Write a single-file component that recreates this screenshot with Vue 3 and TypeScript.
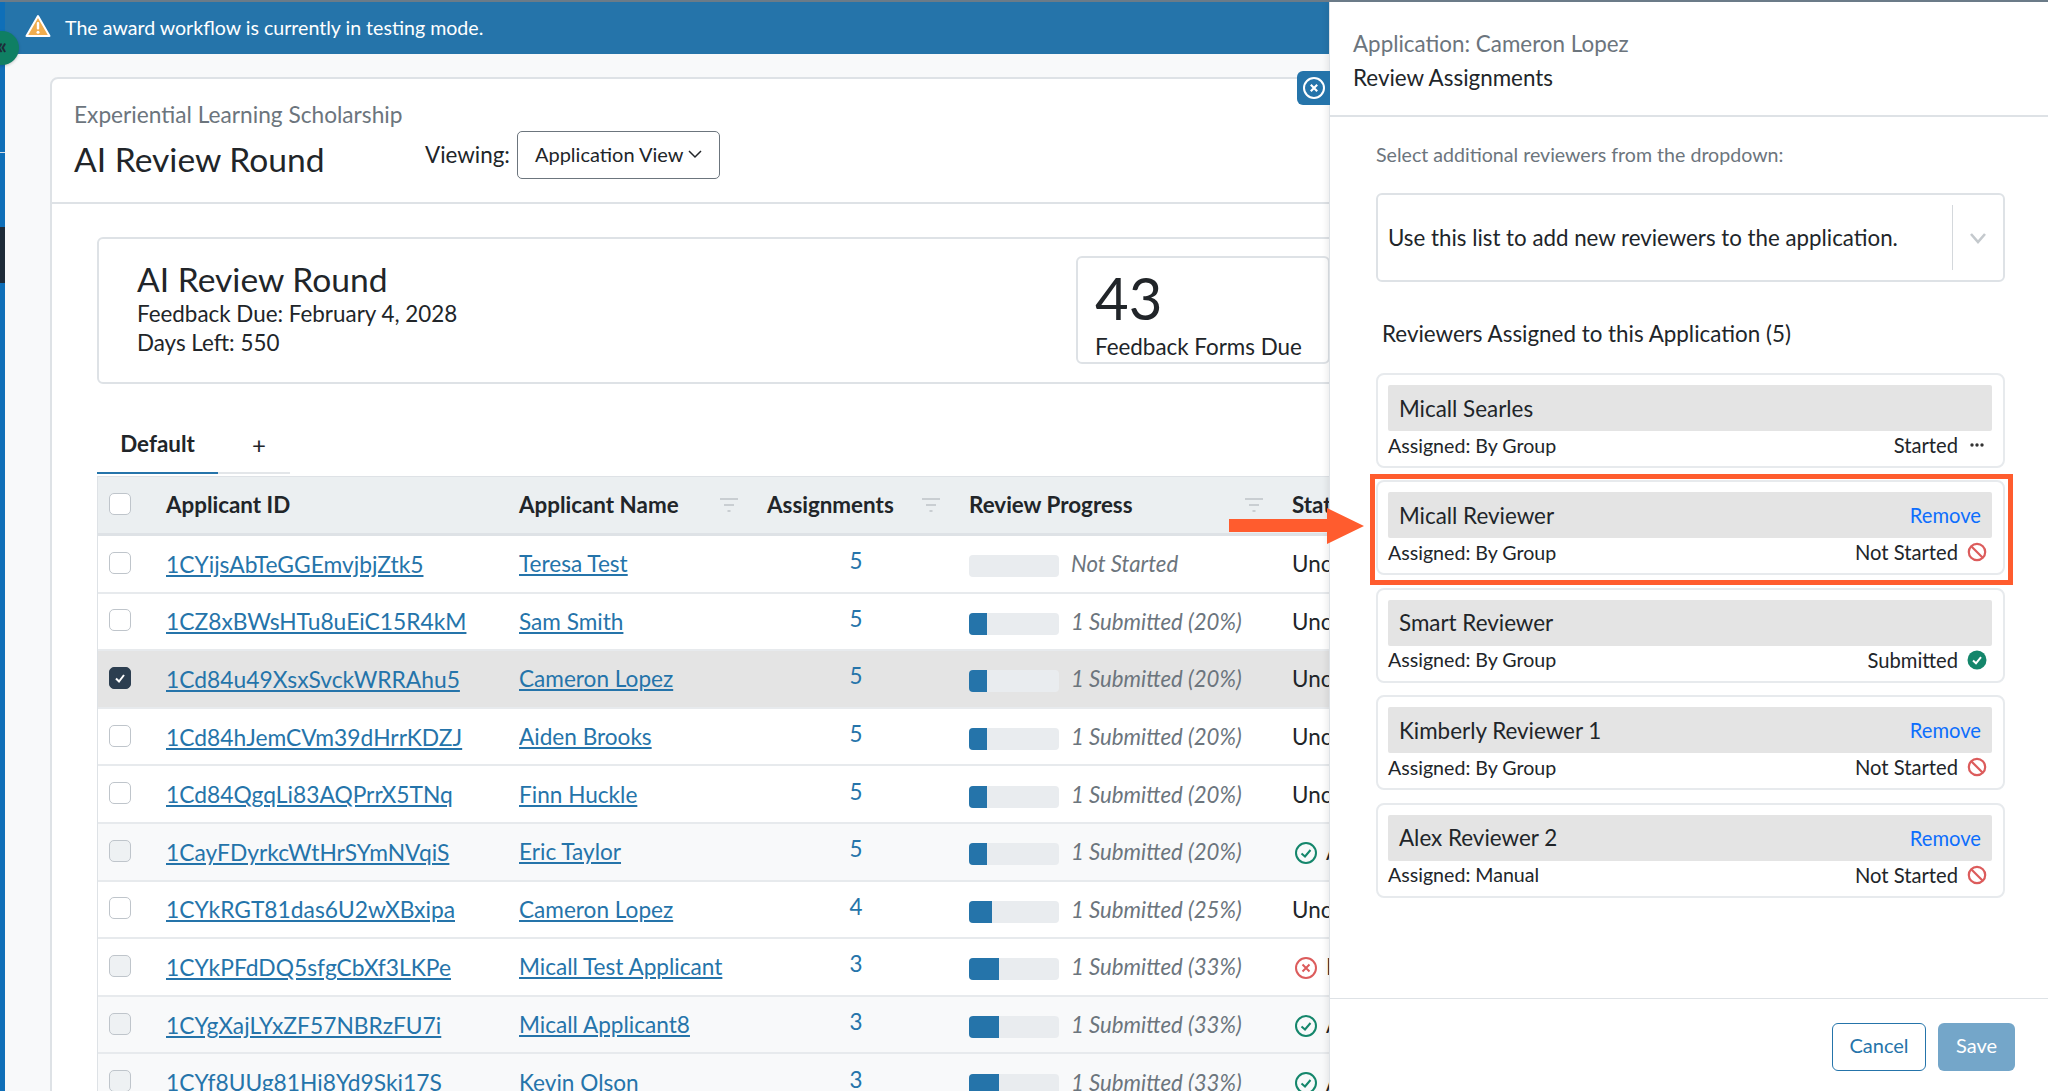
<template>
  <div class="page">
    <div class="main">
      <aside class="sidebar">
        <span class="side-line"></span>
        <span class="side-dark"></span>
      </aside>
      <div class="content">
        <div class="banner">
          <svg class="warn" viewBox="0 0 26 24" width="26" height="24">
            <path d="M13 2 L24.5 22 H1.5 Z" fill="#f0ad4e" stroke="#fff" stroke-width="2" stroke-linejoin="round" />
            <rect x="11.8" y="8" width="2.4" height="7.5" rx="1" fill="#fff" />
            <circle cx="13" cy="18.3" r="1.5" fill="#fff" />
          </svg>
          <span>The award workflow is currently in testing mode.</span>
        </div>
        <div class="scroll">
          <section class="card">
            <header class="card-head">
              <div class="head-left">
                <div class="eyebrow">Experiential Learning Scholarship</div>
                <h1>AI Review Round</h1>
              </div>
              <div class="viewing">
                <span class="viewing-label">Viewing:</span>
                <button class="view-select">
                  Application View
                  <svg viewBox="0 0 16 16" width="16" height="16"><path d="M2 5 L8 11 L14 5" fill="none" stroke="#212529" stroke-width="1.5" /></svg>
                </button>
              </div>
            </header>
            <div class="card-body">
              <div class="round-box">
                <div class="round-info">
                  <h2>AI Review Round</h2>
                  <div>Feedback Due: February 4, 2028</div>
                  <div>Days Left: 550</div>
                </div>
                <div class="stat">
                  <div class="stat-num">43</div>
                  <div class="stat-label">Feedback Forms Due</div>
                </div>
              </div>

              <div class="tabs">
                <div class="tab active">Default</div>
                <div class="tab plus">+</div>
              </div>

              <div class="table">
                <div class="row head">
                  <div class="cell"><span class="check"></span></div>
                  <div class="cell">Applicant ID</div>
                  <div class="cell between">Applicant Name
                    <svg class="filter" viewBox="0 0 18 14" width="18" height="14"><path d="M0 1h18M4 7h10M7.5 13h3" stroke="#c9ced2" stroke-width="2" /></svg>
                  </div>
                  <div class="cell between">Assignments
                    <svg class="filter" viewBox="0 0 18 14" width="18" height="14"><path d="M0 1h18M4 7h10M7.5 13h3" stroke="#c9ced2" stroke-width="2" /></svg>
                  </div>
                  <div class="cell between">Review Progress
                    <svg class="filter" viewBox="0 0 18 14" width="18" height="14"><path d="M0 1h18M4 7h10M7.5 13h3" stroke="#c9ced2" stroke-width="2" /></svg>
                  </div>
                  <div class="cell">Status</div>
                </div>
                <div
                  v-for="a in applicants"
                  :key="a.id"
                  class="row"
                  :class="{ selected: a.selected, muted: a.muted }"
                >
                  <div class="cell">
                    <span class="check" :class="{ on: a.selected, off: a.status !== 'Unclaimed' }">
                      <svg v-if="a.selected" viewBox="0 0 12 12" width="12" height="12"><path d="M2 6.5 L5 9.5 L10 3" fill="none" stroke="#fff" stroke-width="2" /></svg>
                    </span>
                  </div>
                  <div class="cell"><a class="link id-link">{{ a.id }}</a></div>
                  <div class="cell"><a class="link">{{ a.name }}</a></div>
                  <div class="cell count">{{ a.total }}</div>
                  <div class="cell progress">
                    <span class="bar"><span class="fill" :style="{ width: percent(a) + '%' }"></span></span>
                    <em>{{ a.submitted ? `1 Submitted (${percent(a)}%)` : 'Not Started' }}</em>
                  </div>
                  <div class="cell status">
                    <svg v-if="a.status === 'Approved'" viewBox="0 0 24 24" width="24" height="24">
                      <circle cx="12" cy="12" r="10" fill="none" stroke="#14866b" stroke-width="2" />
                      <path d="M7.5 12.5 L11 15.5 L16.5 9" fill="none" stroke="#14866b" stroke-width="2" />
                    </svg>
                    <svg v-if="a.status === 'Ineligible'" viewBox="0 0 24 24" width="24" height="24">
                      <circle cx="12" cy="12" r="10" fill="none" stroke="#dc5c5c" stroke-width="2" />
                      <path d="M8.5 8.5 L15.5 15.5 M15.5 8.5 L8.5 15.5" stroke="#dc5c5c" stroke-width="2" />
                    </svg>
                    {{ a.status }}
                  </div>
                </div>
              </div>
            </div>
          </section>
        </div>
      </div>
    </div>

    <aside class="panel">
      <button class="panel-close">
        <svg viewBox="0 0 24 24" width="24" height="24">
          <circle cx="12" cy="12" r="10" fill="none" stroke="#fff" stroke-width="2" />
          <path d="M8.8 8.8 L15.2 15.2 M15.2 8.8 L8.8 15.2" stroke="#fff" stroke-width="2.2" />
        </svg>
      </button>
      <header class="panel-head">
        <div class="panel-app">Application: Cameron Lopez</div>
        <div class="panel-title">Review Assignments</div>
      </header>
      <div class="panel-body">
        <p class="hint">Select additional reviewers from the dropdown:</p>
        <div class="picker">
          <span>Use this list to add new reviewers to the application.</span>
          <span class="picker-sep"></span>
          <svg viewBox="0 0 18 12" width="18" height="12"><path d="M2 2 L9 10 L16 2" fill="none" stroke="#c4c9cd" stroke-width="2.6" /></svg>
        </div>
        <h3>Reviewers Assigned to this Application (5)</h3>
        <div class="reviewers">
          <div
            v-for="r in reviewers"
            :key="r.name"
            class="reviewer"
            :class="{ marked: r.marked }"
          >
            <div class="reviewer-name">
              <span>{{ r.name }}</span>
              <a v-if="r.state === 'Not Started'" class="remove">Remove</a>
            </div>
            <div class="reviewer-meta">
              <span>Assigned: {{ r.assigned }}</span>
              <span class="state">
                {{ r.state }}
                <svg v-if="r.state === 'Started'" viewBox="0 0 20 20" width="20" height="20">
                  <circle cx="5" cy="10" r="1.7" fill="#333" /><circle cx="10" cy="10" r="1.7" fill="#333" /><circle cx="15" cy="10" r="1.7" fill="#333" />
                </svg>
                <svg v-else-if="r.state === 'Not Started'" viewBox="0 0 20 20" width="20" height="20">
                  <circle cx="10" cy="10" r="8.2" fill="none" stroke="#dc5c5c" stroke-width="2.2" />
                  <path d="M4.5 4.5 L15.5 15.5" stroke="#dc5c5c" stroke-width="2.2" />
                </svg>
                <svg v-else viewBox="0 0 20 20" width="20" height="20">
                  <circle cx="10" cy="10" r="9.5" fill="#14866b" />
                  <path d="M6 10.5 L9 13.3 L14 7.2" fill="none" stroke="#fff" stroke-width="2" />
                </svg>
              </span>
            </div>
          </div>
        </div>
      </div>
      <footer class="panel-foot">
        <button class="btn cancel">Cancel</button>
        <button class="btn save">Save</button>
      </footer>
    </aside>

    <span class="collapse">«</span>
    <svg class="arrow" viewBox="0 0 135 36" width="135" height="36">
      <path d="M0 11 H98 V0 L135 18 L98 36 V24 H0 Z" fill="#ff5c2e" />
    </svg>
  </div>
</template>

<script setup lang="ts">
interface Applicant {
  id: string
  name: string
  total: number
  submitted: boolean
  status: string
  selected?: boolean
  muted?: boolean
}

interface Reviewer {
  name: string
  assigned: string
  state: 'Started' | 'Not Started' | 'Submitted'
  marked?: boolean
}

const applicants: Applicant[] = [
  { id: '1CYijsAbTeGGEmvjbjZtk5', name: 'Teresa Test', total: 5, submitted: false, status: 'Unclaimed' },
  { id: '1CZ8xBWsHTu8uEiC15R4kM', name: 'Sam Smith', total: 5, submitted: true, status: 'Unclaimed' },
  { id: '1Cd84u49XsxSvckWRRAhu5', name: 'Cameron Lopez', total: 5, submitted: true, status: 'Unclaimed', selected: true },
  { id: '1Cd84hJemCVm39dHrrKDZJ', name: 'Aiden Brooks', total: 5, submitted: true, status: 'Unclaimed' },
  { id: '1Cd84QgqLi83AQPrrX5TNq', name: 'Finn Huckle', total: 5, submitted: true, status: 'Unclaimed' },
  { id: '1CayFDyrkcWtHrSYmNVqiS', name: 'Eric Taylor', total: 5, submitted: true, status: 'Approved', muted: true },
  { id: '1CYkRGT81das6U2wXBxipa', name: 'Cameron Lopez', total: 4, submitted: true, status: 'Unclaimed' },
  { id: '1CYkPFdDQ5sfgCbXf3LKPe', name: 'Micall Test Applicant', total: 3, submitted: true, status: 'Ineligible' },
  { id: '1CYgXajLYxZF57NBRzFU7i', name: 'Micall Applicant8', total: 3, submitted: true, status: 'Approved', muted: true },
  { id: '1CYf8UUg81Hi8Yd9Ski17S', name: 'Kevin Olson', total: 3, submitted: true, status: 'Approved', muted: true },
]

const reviewers: Reviewer[] = [
  { name: 'Micall Searles', assigned: 'By Group', state: 'Started' },
  { name: 'Micall Reviewer', assigned: 'By Group', state: 'Not Started', marked: true },
  { name: 'Smart Reviewer', assigned: 'By Group', state: 'Submitted' },
  { name: 'Kimberly Reviewer 1', assigned: 'By Group', state: 'Not Started' },
  { name: 'Alex Reviewer 2', assigned: 'Manual', state: 'Not Started' },
]

function percent(a: Applicant): number {
  return a.submitted ? Math.floor(100 / a.total) : 0
}
</script>

<style>
html,
body {
  margin: 0;
  overflow: hidden;
}
</style>

<style scoped>
.page {
  position: relative;
  display: flex;
  width: 2048px;
  height: 1091px;
  overflow: hidden;
  border-top: 2px solid #6b7b88;
  box-sizing: border-box;
  font-family: Lato, sans-serif;
  font-size: 22.4px;
  color: #212529;
  background: #fff;
}

.main {
  display: flex;
  width: 1329px;
  flex: none;
  overflow: hidden;
}

.sidebar {
  flex: none;
  width: 5px;
  background: #0f6fb8;
  display: flex;
  flex-direction: column;
}

.side-line {
  height: 1px;
  margin-top: 150px;
  background: #d6dde3;
}

.side-dark {
  height: 56px;
  margin-top: 74px;
  background: #1e2b38;
}

.content {
  flex: 1;
  min-width: 0;
  background: #f8f9fa;
}

.banner {
  height: 52px;
  display: flex;
  align-items: center;
  gap: 14px;
  padding-left: 20px;
  padding-bottom: 2px;
  box-sizing: border-box;
  background: #2574aa;
  color: #fff;
  font-size: 19.6px;
}

.warn {
  margin-top: -2px;
}

.scroll {
  padding: 23px 0 0 45px;
}

.card {
  width: 1500px;
  background: #fff;
  border: 2px solid #dee2e6;
  border-radius: 8px;
}

.card-head {
  display: flex;
  padding: 22px;
  border-bottom: 2px solid #dee2e6;
}

.head-left {
  width: 351px;
  flex: none;
}

.eyebrow {
  font-size: 22.7px;
  line-height: 28px;
  color: #6c757d;
  margin-bottom: 10px;
}

h1 {
  margin: 0 0 1px;
  font-size: 33.6px;
  line-height: 40px;
  font-weight: 400;
}

.viewing {
  align-self: flex-end;
  display: flex;
  align-items: center;
  gap: 7px;
  margin-bottom: 1px;
}

.viewing-label {
  margin-top: -2px;
}

.view-select {
  display: flex;
  align-items: center;
  gap: 4px;
  width: 203px;
  height: 48px;
  padding: 0 0 2px 17px;
  background: #fff;
  border: 1px solid #6c757d;
  border-radius: 5px;
  font-family: inherit;
  font-size: 20px;
  color: #212529;
}

.card-body {
  padding: 33px 0 0 45px;
}

.round-box {
  display: flex;
  width: 1400px;
  height: 147px;
  box-sizing: border-box;
  border: 2px solid #dee2e6;
  border-radius: 6px;
}

.round-info {
  flex: none;
  width: 977px;
  box-sizing: border-box;
  padding: 21px 0 0 38px;
  line-height: 29px;
}

h2 {
  margin: 0;
  font-size: 33.6px;
  line-height: 39px;
  font-weight: 400;
}

.stat {
  width: 254px;
  height: 108px;
  margin-top: 17px;
  box-sizing: border-box;
  padding-left: 17px;
  border: 2px solid #dee2e6;
  border-radius: 6px;
}

.stat-num {
  font-size: 58px;
  line-height: 66px;
  margin-top: 7px;
}

.stat-label {
  line-height: 31px;
}

.tabs {
  display: flex;
  width: 193px;
  height: 52px;
  margin-top: 36px;
  border-bottom: 2px solid #e3e6e9;
}

.tab {
  display: flex;
  align-items: center;
  justify-content: center;
  width: 121px;
  margin-bottom: -2px;
  padding-bottom: 5px;
  box-sizing: border-box;
  font-weight: 700;
}

.tab.active {
  border-bottom: 2px solid #2574aa;
}

.tab.plus {
  width: 72px;
  padding-left: 10px;
  font-weight: 400;
  font-size: 24px;
}

.table {
  width: 1400px;
  margin-top: 2px;
  border-left: 1px solid #dee2e6;
  border-top: 1px solid #dee2e6;
}

.row {
  display: grid;
  grid-template-columns: 68px 353px 248px 202px 323px 1fr;
  height: 57.6px;
  box-sizing: border-box;
  border-bottom: 2px solid #e7eaed;
  background: #fff;
}

.row.head {
  height: 59px;
  padding-bottom: 1px;
  background: #ebeff1;
  border-bottom: 3px solid #dee2e6;
  font-weight: 700;
}

.row.selected {
  background: #e4e4e4;
}

.row.muted {
  background: #f8f9fa;
}

.cell {
  display: flex;
  align-items: center;
  min-width: 0;
  white-space: nowrap;
}

.between {
  justify-content: space-between;
  padding-right: 29px;
}

.check {
  display: flex;
  align-items: center;
  justify-content: center;
  width: 22px;
  height: 22px;
  margin: -2px 0 0 11px;
  box-sizing: border-box;
  border: 1.5px solid #bfc5cb;
  border-radius: 5px;
  background: #fff;
}

.check.off {
  background: #eef1f3;
}

.check.on {
  background: #2c3e50;
  border-color: #2c3e50;
}

.link {
  font-size: 22.6px;
  color: #2574aa;
  text-decoration: underline;
}

.id-link {
  font-size: 22.8px;
}

.count {
  justify-content: center;
  padding: 0 0 6px 0;
  width: 178px;
  color: #2574aa;
}

.progress {
  gap: 12px;
}

.bar {
  display: block;
  width: 90px;
  height: 22px;
  margin-top: 5px;
  border-radius: 4px;
  background: #e9ecef;
  overflow: hidden;
}

.fill {
  display: block;
  height: 100%;
  background: #2574aa;
}

.progress em {
  font-size: 22.2px;
  color: #6c757d;
}

.status {
  gap: 8px;
}

.status svg {
  margin: 2px 0 0 2px;
}

.panel {
  position: relative;
  flex: 1;
  display: flex;
  flex-direction: column;
  background: #fff;
  border-left: 1px solid #dee2e6;
  box-shadow: -2px 0 6px rgba(0, 0, 0, 0.08);
}

.panel-close {
  position: absolute;
  top: 69px;
  right: 100%;
  display: flex;
  align-items: center;
  justify-content: center;
  width: 33px;
  height: 34px;
  padding: 0;
  border: 0;
  border-radius: 6px 0 0 6px;
  background: #2574aa;
}

.panel-head {
  height: 115px;
  box-sizing: border-box;
  padding: 25px 0 0 23px;
  border-bottom: 2px solid #dee2e6;
  line-height: 34px;
}

.panel-app {
  color: #6c757d;
}

.panel-body {
  flex: 1;
  padding: 0 43px 0 46px;
}

.hint {
  margin: 26px 0 0;
  line-height: 24px;
  font-size: 19.6px;
  color: #6c757d;
}

.picker {
  display: flex;
  align-items: center;
  height: 89px;
  margin-top: 26px;
  box-sizing: border-box;
  padding: 0 16px 0 10px;
  border: 2px solid #dee2e6;
  border-radius: 6px;
  font-size: 22.3px;
}

.picker span:first-child {
  flex: 1;
}

.picker-sep {
  width: 1px;
  height: 65px;
  margin-right: 16px;
  background: #d4d8dc;
}

h3 {
  margin: 38px 0 25px 6px;
  font-size: 22.4px;
  line-height: 28px;
  font-weight: 400;
}

.reviewers {
  display: flex;
  flex-direction: column;
  gap: 12.4px;
}

.reviewer {
  position: relative;
  height: 95px;
  box-sizing: border-box;
  padding: 10px 11px 10px 10px;
  border: 2px solid #e7eaed;
  border-radius: 8px;
}

.reviewer.marked::after {
  content: '';
  position: absolute;
  inset: -8px -10px -12px -8px;
  border: 5px solid #ff5c2e;
}

.reviewer-name {
  display: flex;
  align-items: center;
  justify-content: space-between;
  height: 46px;
  padding: 0 11px;
  background: #e4e4e4;
  border-radius: 2px;
}

.remove {
  color: #0d6efd;
  font-size: 20.2px;
}

.reviewer-meta {
  display: flex;
  align-items: center;
  justify-content: space-between;
  height: 28px;
  font-size: 19.6px;
  padding-right: 5px;
}

.state {
  display: flex;
  align-items: center;
  gap: 9px;
  font-size: 20.2px;
}

.panel-foot {
  display: flex;
  justify-content: flex-end;
  gap: 12px;
  height: 93px;
  box-sizing: border-box;
  padding: 24px 33px 0 0;
  border-top: 1px solid #dee2e6;
}

.btn {
  height: 48px;
  padding: 0 0 4px;
  border-radius: 6px;
  font-family: inherit;
  font-size: 20px;
}

.cancel {
  width: 94px;
  background: #fff;
  color: #2574aa;
  border: 1px solid #2574aa;
}

.save {
  width: 77px;
  background: #74a6c9;
  color: #fff;
  border: 0;
}

.collapse {
  position: absolute;
  top: 29px;
  left: -15px;
  width: 34px;
  height: 34px;
  border-radius: 50%;
  background: #0f7f63;
  color: #1e2b38;
  font-size: 22px;
  line-height: 30px;
  font-weight: 700;
  text-align: center;
  box-shadow: 0 1px 3px rgba(0, 0, 0, 0.2);
}

.arrow {
  position: absolute;
  left: 1229px;
  top: 506px;
}
</style>
